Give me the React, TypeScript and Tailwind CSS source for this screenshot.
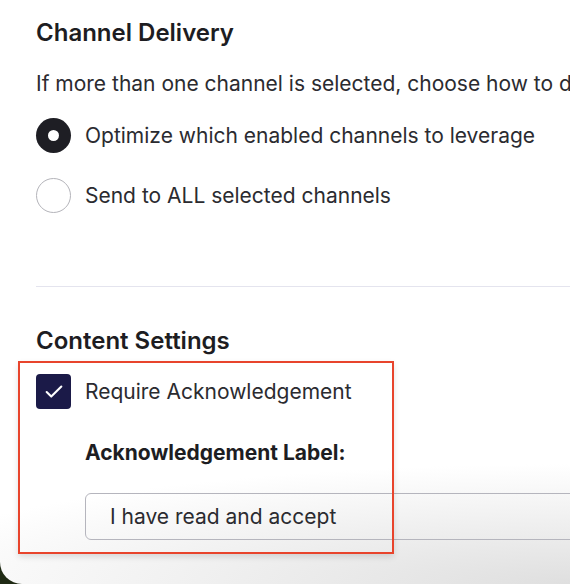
import { Check } from "lucide-react";

const deliveryOptions = [
  { id: "optimize", label: "Optimize which enabled channels to leverage" },
  { id: "all", label: "Send to ALL selected channels" },
];

function Radio({ checked, label }: { checked: boolean; label: string }) {
  return (
    <label className="flex items-center gap-[14px] h-[35px]">
      {checked ? (
        <span className="flex items-center justify-center w-[35px] h-[35px] rounded-full bg-[#1e1e24]">
          <span className="w-[11px] h-[11px] rounded-full bg-white" />
        </span>
      ) : (
        <span className="w-[35px] h-[35px] rounded-full border border-[#b4b4ba] bg-white" />
      )}
      <span className="text-[21px] text-[#2b2b30] whitespace-nowrap">{label}</span>
    </label>
  );
}

export default function App() {
  const selected = "optimize";

  return (
    <div className="w-[570px] h-[584px] bg-[#1f2a14] overflow-hidden font-['Inter','Liberation_Sans',sans-serif]">
      <div className="relative h-full rounded-bl-[22px] bg-[radial-gradient(ellipse_700px_120px_at_100%_100%,#dfdfdf,#ffffff)] pl-[36px] pt-[19px] overflow-hidden">
        <h2 className="text-[24px] leading-[28px] font-semibold text-[#1d1d22] whitespace-nowrap">
          Channel Delivery
        </h2>
        <p className="mt-[23px] text-[21px] leading-[28px] text-[#2b2b30] whitespace-nowrap">
          If more than one channel is selected, choose how to deliver the message.
        </p>

        <div className="mt-[20px] flex flex-col gap-[25px]">
          {deliveryOptions.map((opt) => (
            <Radio key={opt.id} checked={opt.id === selected} label={opt.label} />
          ))}
        </div>

        <div className="mt-[73px] h-px w-[700px] bg-[#e4e4ee]" />

        <h2 className="mt-[40px] text-[24px] leading-[28px] font-semibold text-[#1d1d22] whitespace-nowrap">
          Content Settings
        </h2>

        <div className="mt-[19px] flex items-center gap-[14px] h-[35px]">
          <span className="flex items-center justify-center w-[35px] h-[35px] rounded-[4px] bg-[#1b1a48]">
            <Check className="w-[22px] h-[22px] text-white" strokeWidth={2.25} />
          </span>
          <span className="text-[21px] text-[#2b2b30] whitespace-nowrap">Require Acknowledgement</span>
        </div>

        <div className="pl-[49px]">
          <div className="mt-[30px] text-[21px] leading-[28px] font-bold text-[#1d1d22] whitespace-nowrap">
            Acknowledgement Label:
          </div>
          <div className="mt-[26px] h-[47px] w-[700px] rounded-[6px] border border-[#b5b5bd] flex items-center pl-[24px] text-[21px] text-[#2b2b30] whitespace-nowrap">
            I have read and accept
          </div>
        </div>

        {/* highlight around the acknowledgement settings */}
        <div className="absolute left-[18px] top-[361px] w-[376px] h-[193px] border-2 border-[#e8442c] shadow-[0_3px_6px_rgba(0,0,0,0.12)] pointer-events-none" />
      </div>
    </div>
  );
}
